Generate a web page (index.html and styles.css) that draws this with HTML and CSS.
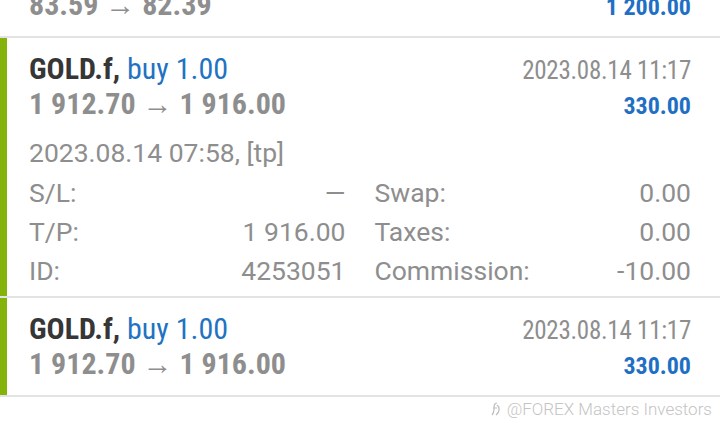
FILE: index.html
```html
<!DOCTYPE html>
<html lang="en">

<head>
    <meta charset="UTF-8">
    <meta name="viewport" content="width=device-width, initial-scale=1.0">
    <title>History</title>
    <link rel="stylesheet" href="styles.css">
</head>

<body>
    <div class="history">
        <div class="deal partial">
            <div class="deal-body">
                <div class="row second">
                    <span class="prices">83.59 &rarr; 82.39</span>
                    <span class="profit">1 200.00</span>
                </div>
            </div>
        </div>

        <div class="deal">
            <div class="deal-body closed">
                <div class="row first">
                    <span class="title">GOLD.f, <span class="side">buy 1.00</span></span>
                    <span class="time">2023.08.14 11:17</span>
                </div>
                <div class="row second">
                    <span class="prices">1 912.70 &rarr; 1 916.00</span>
                    <span class="profit">330.00</span>
                </div>
                <div class="open-time">2023.08.14 07:58, [tp]</div>
                <div class="details">
                    <div class="detail-item">
                        <span class="label">S/L:</span>
                        <span class="value">&mdash;</span>
                    </div>
                    <div class="detail-item">
                        <span class="label">Swap:</span>
                        <span class="value">0.00</span>
                    </div>
                    <div class="detail-item">
                        <span class="label">T/P:</span>
                        <span class="value">1 916.00</span>
                    </div>
                    <div class="detail-item">
                        <span class="label">Taxes:</span>
                        <span class="value">0.00</span>
                    </div>
                    <div class="detail-item">
                        <span class="label">ID:</span>
                        <span class="value">4253051</span>
                    </div>
                    <div class="detail-item">
                        <span class="label">Commission:</span>
                        <span class="value">-10.00</span>
                    </div>
                </div>
            </div>
        </div>

        <div class="deal">
            <div class="deal-body closed">
                <div class="row first">
                    <span class="title">GOLD.f, <span class="side">buy 1.00</span></span>
                    <span class="time">2023.08.14 11:17</span>
                </div>
                <div class="row second">
                    <span class="prices">1 912.70 &rarr; 1 916.00</span>
                    <span class="profit">330.00</span>
                </div>
            </div>
        </div>
    </div>

    <div class="watermark">
        <svg width="10" height="16" viewBox="0 0 10 16">
            <path d="M6 2 C3 2 3 5 3 8 C3 11 2 13 1 14 M2 7 L6 7 M6 4 C9 6 9 11 5 14" fill="none" stroke="#bdbdbd" stroke-width="1.2" />
        </svg>
        <span>@FOREX Masters Investors</span>
    </div>
</body>

</html>
```

FILE: styles.css
```css
* {
    margin: 0;
    padding: 0;
    box-sizing: border-box;
}

body {
    background-color: #ffffff;
    font-family: Roboto, "Liberation Sans", sans-serif;
    color: #8e8e8e;
    overflow: hidden;
}

.history {
    margin-top: -12px;
    border-bottom: 2px solid #e3e3e3;
}

.deal {
    border-top: 2px solid #e3e3e3;
}

.partial {
    border-top: none;
}

.partial .deal-body {
    padding-top: 0;
}

.deal-body {
    padding: 13px 29px 6px 22px;
    border-left: 7px solid transparent;
}

.closed {
    border-left-color: #84b40c;
}

.row {
    display: flex;
    justify-content: space-between;
    align-items: baseline;
}

.first {
    height: 36px;
    line-height: 36px;
}

.second {
    height: 34px;
    line-height: 34px;
}

.deal-body > .second:last-child {
    height: 42px;
}

.title {
    font-size: 30px;
    font-weight: bold;
    font-stretch: condensed;
    color: #363636;
}

.side {
    font-weight: normal;
    color: #1f73c2;
}

.time {
    font-size: 25px;
    font-stretch: condensed;
    letter-spacing: -0.25px;
}

.prices {
    font-size: 30px;
    font-weight: bold;
    font-stretch: condensed;
}

.profit {
    font-size: 24px;
    font-weight: bold;
    font-stretch: condensed;
    color: #1f6fc4;
}

.open-time {
    font-size: 26.5px;
    line-height: 40px;
    margin-top: 12px;
}

.details {
    display: grid;
    grid-template-columns: 1fr 1fr;
    column-gap: 29px;
    font-size: 26.5px;
    line-height: 39px;
}

.detail-item {
    display: flex;
    justify-content: space-between;
}

.watermark {
    display: flex;
    justify-content: flex-end;
    align-items: center;
    gap: 6px;
    padding: 2px 8px 0 0;
    font-size: 17px;
    font-weight: 300;
    color: #c4c4c4;
}
```
